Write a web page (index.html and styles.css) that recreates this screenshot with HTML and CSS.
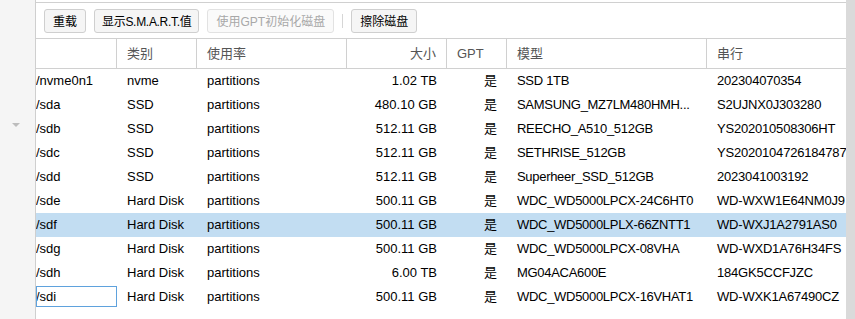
FILE: index.html
```html
<!DOCTYPE html>
<html lang="zh-CN">

<head>
    <meta charset="UTF-8">
    <title>磁盘</title>
    <link rel="stylesheet" href="styles.css">
</head>

<body>

    <div class="side-strip">
        <span class="collapse-arrow"></span>
    </div>

    <div class="disk-panel">
        <div class="toolbar">
            <button class="tool-btn">重载</button>
            <button class="tool-btn">显示S.M.A.R.T.值</button>
            <button class="tool-btn" disabled>使用GPT初始化磁盘</button>
            <span class="tool-sep"></span>
            <button class="tool-btn">擦除磁盘</button>
        </div>

        <div class="disk-grid">
            <div class="grid-row grid-head">
                <div class="cell"></div>
                <div class="cell">类别</div>
                <div class="cell">使用率</div>
                <div class="cell num">大小</div>
                <div class="cell">GPT</div>
                <div class="cell">模型</div>
                <div class="cell">串行</div>
            </div>

            <div class="grid-row">
                <div class="cell dev">/nvme0n1</div>
                <div class="cell">nvme</div>
                <div class="cell">partitions</div>
                <div class="cell num">1.02 TB</div>
                <div class="cell num">是</div>
                <div class="cell model">SSD 1TB</div>
                <div class="cell serial">202304070354</div>
            </div>
            <div class="grid-row">
                <div class="cell dev">/sda</div>
                <div class="cell">SSD</div>
                <div class="cell">partitions</div>
                <div class="cell num">480.10 GB</div>
                <div class="cell num">是</div>
                <div class="cell model">SAMSUNG_MZ7LM480HMH...</div>
                <div class="cell serial">S2UJNX0J303280</div>
            </div>
            <div class="grid-row">
                <div class="cell dev">/sdb</div>
                <div class="cell">SSD</div>
                <div class="cell">partitions</div>
                <div class="cell num">512.11 GB</div>
                <div class="cell num">是</div>
                <div class="cell model">REECHO_A510_512GB</div>
                <div class="cell serial">YS202010508306HT</div>
            </div>
            <div class="grid-row">
                <div class="cell dev">/sdc</div>
                <div class="cell">SSD</div>
                <div class="cell">partitions</div>
                <div class="cell num">512.11 GB</div>
                <div class="cell num">是</div>
                <div class="cell model">SETHRISE_512GB</div>
                <div class="cell serial">YS2020104726184787</div>
            </div>
            <div class="grid-row">
                <div class="cell dev">/sdd</div>
                <div class="cell">SSD</div>
                <div class="cell">partitions</div>
                <div class="cell num">512.11 GB</div>
                <div class="cell num">是</div>
                <div class="cell model">Superheer_SSD_512GB</div>
                <div class="cell serial">2023041003192</div>
            </div>
            <div class="grid-row">
                <div class="cell dev">/sde</div>
                <div class="cell">Hard Disk</div>
                <div class="cell">partitions</div>
                <div class="cell num">500.11 GB</div>
                <div class="cell num">是</div>
                <div class="cell model">WDC_WD5000LPCX-24C6HT0</div>
                <div class="cell serial">WD-WXW1E64NM0J9</div>
            </div>
            <div class="grid-row selected">
                <div class="cell dev">/sdf</div>
                <div class="cell">Hard Disk</div>
                <div class="cell">partitions</div>
                <div class="cell num">500.11 GB</div>
                <div class="cell num">是</div>
                <div class="cell model">WDC_WD5000LPLX-66ZNTT1</div>
                <div class="cell serial">WD-WXJ1A2791AS0</div>
            </div>
            <div class="grid-row">
                <div class="cell dev">/sdg</div>
                <div class="cell">Hard Disk</div>
                <div class="cell">partitions</div>
                <div class="cell num">500.11 GB</div>
                <div class="cell num">是</div>
                <div class="cell model">WDC_WD5000LPCX-08VHA</div>
                <div class="cell serial">WD-WXD1A76H34FS</div>
            </div>
            <div class="grid-row">
                <div class="cell dev">/sdh</div>
                <div class="cell">Hard Disk</div>
                <div class="cell">partitions</div>
                <div class="cell num">6.00 TB</div>
                <div class="cell num">是</div>
                <div class="cell model">MG04ACA600E</div>
                <div class="cell serial">184GK5CCFJZC</div>
            </div>
            <div class="grid-row">
                <div class="cell dev focused">/sdi</div>
                <div class="cell">Hard Disk</div>
                <div class="cell">partitions</div>
                <div class="cell num">500.11 GB</div>
                <div class="cell num">是</div>
                <div class="cell model">WDC_WD5000LPCX-16VHAT1</div>
                <div class="cell serial">WD-WXK1A67490CZ</div>
            </div>
        </div>
    </div>

    <div class="scroll-track"></div>

</body>

</html>
```

FILE: styles.css
```css
/* Estructura general */
body {
    font-family: "Liberation Sans", Arial, "Noto Sans CJK SC", sans-serif;
    font-size: 13px;
    color: #000;
    background-color: #fff;
    margin: 0;
    padding: 0;
    display: flex;
    height: 319px;
    overflow: hidden;
}

.side-strip {
    width: 35px;
    flex-shrink: 0;
    background-color: #f5f5f5;
    border-right: 1px solid #cfcfcf;
    padding-top: 123px;
}

.collapse-arrow {
    display: block;
    width: 0;
    height: 0;
    margin-left: 12px;
    border-left: 4px solid transparent;
    border-right: 4px solid transparent;
    border-top: 4px solid #bdbdbd;
}

.disk-panel {
    flex: 1;
    min-width: 0;
    padding-top: 2px;
}

/* Barra de herramientas */
.toolbar {
    display: flex;
    align-items: center;
    gap: 8px;
    height: 36px;
    padding: 0 8px;
    border-top: 1px solid #d0d0d0;
    box-sizing: border-box;
}

.tool-btn {
    font-family: "Liberation Sans", Arial, "Noto Sans CJK SC", sans-serif;
    font-size: 12px;
    height: 24px;
    padding: 0 8px;
    border: 1px solid #cfcfcf;
    border-radius: 3px;
    background-color: #f5f5f5;
    color: #000;
    cursor: pointer;
}

.tool-btn:nth-child(2) {
    letter-spacing: -0.3px;
    padding: 0 7px;
}

.tool-btn:disabled {
    color: #a8a8a8;
    border-color: #e2e2e2;
    background-color: #fafafa;
    cursor: default;
}

.tool-sep {
    width: 1px;
    height: 14px;
    background-color: #d6d6d6;
}

/* Tabla de discos */
.grid-row {
    display: grid;
    grid-template-columns: 81px 80px 150px 100px 60px 200px 1fr;
    height: 24px;
    line-height: 24px;
}

.grid-head {
    height: 31px;
    line-height: 29px;
    border-top: 1px solid #d0d0d0;
    border-bottom: 1px solid #d0d0d0;
    box-sizing: border-box;
    color: #555;
}

.grid-head .cell {
    border-right: 1px solid #d0d0d0;
}

.grid-head .cell:last-child {
    border-right: none;
}

.cell {
    padding: 0 10px;
    white-space: nowrap;
    overflow: hidden;
    position: relative;
}

.cell.num {
    text-align: right;
}

.cell.dev {
    padding: 0;
}

.cell.model {
    padding-right: 2px;
    letter-spacing: -0.3px;
}

.cell.serial {
    padding-right: 0;
    letter-spacing: -0.2px;
}

.grid-row.selected {
    background-color: #c2ddf2;
}

.cell.focused::after {
    content: '';
    position: absolute;
    left: 0;
    right: 0;
    top: 1px;
    bottom: 2px;
    border: 1px solid #5fa2dd;
}

.scroll-track {
    width: 9px;
    flex-shrink: 0;
    background-color: #dadada;
}
```
